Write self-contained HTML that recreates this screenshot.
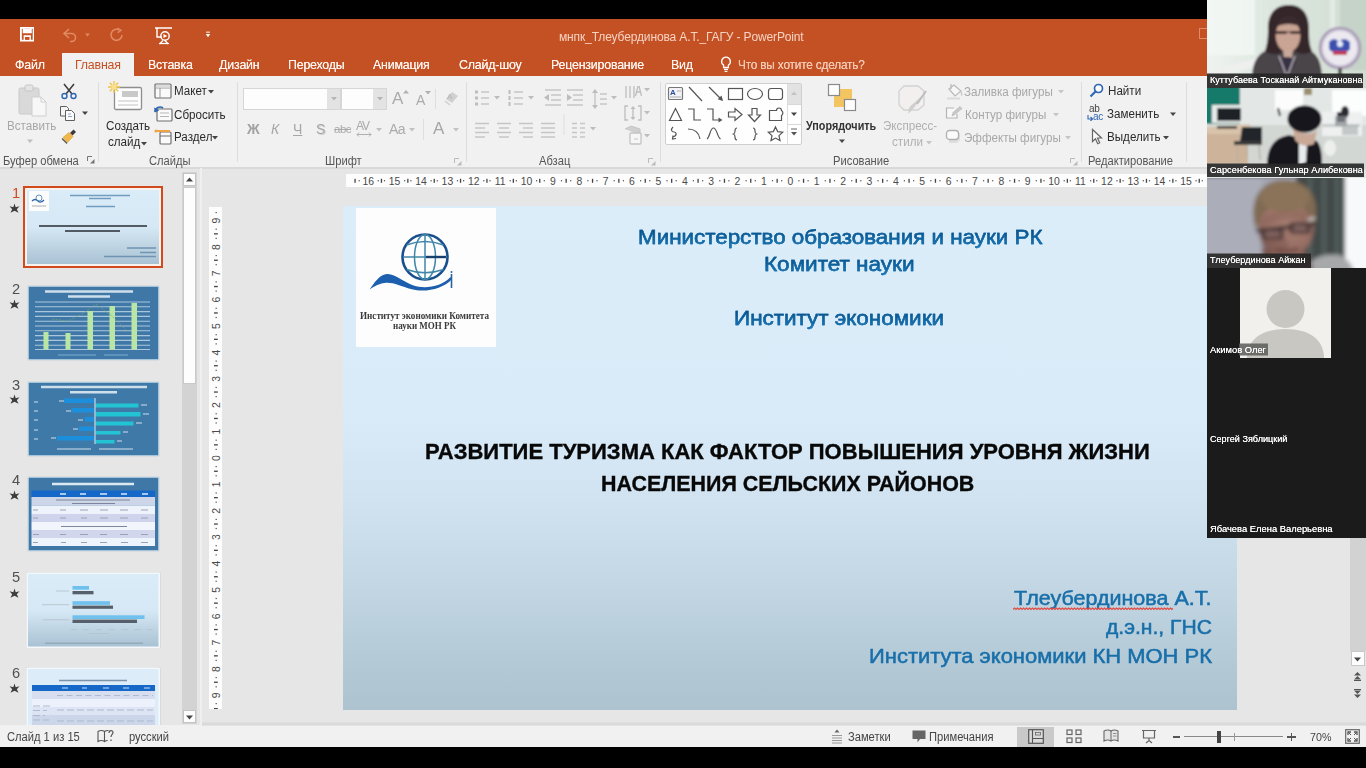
<!DOCTYPE html>
<html lang="ru">
<head>
<meta charset="utf-8">
<title>PowerPoint</title>
<style>
*{margin:0;padding:0;box-sizing:border-box}
html,body{width:1366px;height:768px;overflow:hidden;background:#000}
body{font-family:"Liberation Sans",sans-serif;position:relative;color:#333}
.abs{position:absolute}
.t{position:absolute;white-space:nowrap;line-height:1}
.blur{filter:blur(.45px)}
#titlebar{left:0;top:19px;width:1207px;height:57px;background:#c45124}
#ribbon{left:0;top:76px;width:1207px;height:91px;background:#f1f1f1}
#work{left:0;top:167px;width:1366px;height:558px;background:#e6e6e6}
#status{left:0;top:725px;width:1366px;height:22px;background:#f1f1f1}
#hometab{left:62px;top:53px;width:72px;height:24px;background:#f1f1f1}
.tab{top:59.400px;font-size:12.4px;color:#fdf3ee;letter-spacing:-.2px;text-shadow:0 0 .5px #fdf3ee}
.rl{font-size:12.5px;color:#2b2b2b;transform:scaleX(.93);transform-origin:0 50%}
.rl.dis{color:#a6a6a6}
.grp{font-size:12px;color:#555;top:155px;transform:scaleX(.93);transform-origin:0 50%}
.sep{position:absolute;top:82px;width:1px;height:80px;background:#dcdcdc}
#slide{left:343px;top:206px;width:894px;height:504px;background:linear-gradient(180deg,#dcedfa 0%,#d9ebf8 42%,#d0e2ef 60%,#c0d4e1 78%,#b2c8d5 92%,#adc3d0 100%)}
.sh{font-size:21px;color:#0b6aa8;text-align:center}
.st1{font-size:20.800px;color:#0f6aa6;transform-origin:0 0;background:linear-gradient(180deg,#07528c 22%,#1a7dbd 80%);-webkit-background-clip:text;background-clip:text;-webkit-text-fill-color:transparent;padding:2px 0 5px;-webkit-text-stroke:.45px #0d5f9b}
.st2{font-size:21.400px;font-weight:bold;color:#080808;transform-origin:0 0;padding:2px 0 5px;-webkit-text-stroke:.35px #080808}
.st3{font-size:19.300px;color:#186fa9;transform-origin:0 0;padding:2px 0 5px;-webkit-text-stroke:.5px #186fa9}
.sb{font-size:12px;color:#444;transform:scaleX(.93);transform-origin:0 50%}
.num{font-size:14.600px;color:#555}
.star{font-size:11px;color:#444}
.thumb{position:absolute;box-shadow:0 0 1px #9ab}
#video{left:1207px;top:0;width:159px;height:538px;background:#1b1b1b;overflow:hidden}
.vn{position:absolute;font-size:9px;color:#fff;white-space:nowrap;line-height:1;transform-origin:0 50%;text-shadow:0 0 .5px #fff}
</style>
</head>
<body>
<!-- base frames -->
<div class="abs" id="titlebar"></div>
<div class="abs" id="ribbon"></div>
<div class="abs" id="work"></div>
<div class="abs" id="status"></div>
<div class="abs" id="hometab"></div>
<div class="abs" style="left:0;top:167px;width:1207px;height:1.500px;background:#d9d9d9"></div>

<!--TITLE-->
<div class="blur">
<!-- save icon -->
<svg class="abs" style="left:19.500px;top:27px" width="14.500" height="14.500" viewBox="0 0 16 16"><path d="M1 1h14v14H1z M4 1v5h8V1 M5 15v-5h6v5" fill="none" stroke="#fff" stroke-width="2"/><rect x="4" y="2" width="8" height="3.5" fill="#fff"/><rect x="5.5" y="11" width="5" height="3" fill="#c45124"/></svg>
<!-- undo -->
<svg class="abs" style="left:62px;top:27px" width="30" height="16" viewBox="0 0 30 16"><path d="M7 2L2 6.5 7 11M2.5 6.5h7a4 4 0 0 1 0 8H8" fill="none" stroke="#e08a63" stroke-width="1.6"/><path d="M23 6.5l2.5 3 2.5-3z" fill="#e08a63"/></svg>
<!-- redo -->
<svg class="abs" style="left:109px;top:27px" width="16" height="16" viewBox="0 0 16 16"><path d="M10.5 3.2A5.5 5.5 0 1 0 13 8" fill="none" stroke="#e08a63" stroke-width="1.6"/><path d="M8.5 1l3.5 2.2-3.2 2.5" fill="none" stroke="#e08a63" stroke-width="1.4"/></svg>
<!-- slideshow from start -->
<svg class="abs" style="left:154px;top:26px" width="20" height="20" viewBox="0 0 20 20"><path d="M1 2h17M3 2v9h5M9 14.5l-3.5 3.5M11 14.5l3 3.5" fill="none" stroke="#fff" stroke-width="1.4"/><circle cx="11" cy="10" r="4.2" fill="none" stroke="#fff" stroke-width="1.4"/><path d="M9.5 8.5l3 1.5-3 1.5" fill="#fff" stroke="#fff" stroke-width=".8"/><path d="M5 17.5h10" stroke="#fff" stroke-width="1.2"/></svg>
<!-- qat customise -->
<svg class="abs" style="left:205px;top:31px" width="6" height="8" viewBox="0 0 8 10"><path d="M1.5 1.2h5" stroke="#fff" stroke-width="1.3"/><path d="M1 3.5h6L4 8z" fill="#fff"/></svg>
<div class="t" style="left:559px;top:30.800px;font-size:12.300px;color:#f6d3c3;letter-spacing:-.15px;transform:scaleX(.978);transform-origin:0 50%">мнпк_Тлеубердинова А.Т._ГАГУ - PowerPoint</div>
</div>
<!-- window-control hint at right edge of title bar -->
<div class="abs" style="left:1199px;top:28px;width:8px;height:11px;border:1.5px solid #e6a58a;border-right:none;opacity:.7"></div>
<!--TABS-->
<div class="blur">
<div class="t tab" style="left:15px">Файл</div>
<div class="t tab" style="left:75px;color:#c45124">Главная</div>
<div class="t tab" style="left:148px">Вставка</div>
<div class="t tab" style="left:219px">Дизайн</div>
<div class="t tab" style="left:288px">Переходы</div>
<div class="t tab" style="left:373px">Анимация</div>
<div class="t tab" style="left:459px">Слайд-шоу</div>
<div class="t tab" style="left:551px">Рецензирование</div>
<div class="t tab" style="left:671px">Вид</div>
<svg class="abs" style="left:720px;top:56px" width="12" height="17" viewBox="0 0 12 17"><path d="M6 1.2a4.3 4.3 0 0 0-2.4 7.9V11.5h4.8V9.1A4.3 4.3 0 0 0 6 1.2z" fill="none" stroke="#fff" stroke-width="1.3"/><path d="M4 13.3h4M4.6 15.3h2.8" stroke="#fff" stroke-width="1.2"/></svg>
<div class="t tab" style="left:738px;color:#f3c9b5;text-shadow:0 0 .4px #f3c9b5;transform:scaleX(.955);transform-origin:0 50%">Что вы хотите сделать?</div>
</div>
<!--RIBBON-->
<div class="blur" id="rb">
<!-- separators -->
<div class="sep" style="left:98px"></div><div class="sep" style="left:237px"></div><div class="sep" style="left:466px"></div><div class="sep" style="left:660px"></div><div class="sep" style="left:1081px"></div><div class="sep" style="left:1186px"></div>
<!-- ===== Clipboard ===== -->
<svg class="abs" style="left:17px;top:83px" width="34" height="36" viewBox="0 0 34 36"><rect x="2" y="5" width="20" height="26" rx="1.5" fill="#d9d9d9" stroke="#c9c9c9"/><rect x="8" y="2" width="8" height="6" rx="1.5" fill="#e4e4e4" stroke="#c4c4c4"/><path d="M15 14h9l5 5v14H15z" fill="#f7f7f7" stroke="#cfcfcf"/><path d="M24 14v5h5" fill="none" stroke="#cfcfcf"/></svg>
<div class="t rl dis" style="left:7px;top:120px">Вставить</div>
<svg class="abs" style="left:27px;top:139px" width="7" height="5"><path d="M0 .5h6L3 4z" fill="#bdbdbd"/></svg>
<!-- scissors -->
<svg class="abs" style="left:60px;top:83px" width="18" height="17" viewBox="0 0 18 17"><path d="M4 1l8 10M14 1L6 11" stroke="#3b3b3b" stroke-width="1.5" fill="none"/><circle cx="4.5" cy="13" r="2.5" fill="none" stroke="#2f66b3" stroke-width="1.4"/><circle cx="13.5" cy="13" r="2.5" fill="none" stroke="#2f66b3" stroke-width="1.4"/></svg>
<!-- copy -->
<svg class="abs" style="left:59px;top:105px" width="18" height="17" viewBox="0 0 18 17"><path d="M1.5 1.5h6l2 2V11h-8z" fill="#f4f4f4" stroke="#5f5f5f"/><path d="M6.500 5.500h6l3 3V15.500h-9z" fill="#fbfbfb" stroke="#5f5f5f"/><path d="M9 9h3M9 11.500h4" stroke="#8ea5c8"/></svg>
<svg class="abs" style="left:82px;top:111px" width="7" height="5"><path d="M0 .5h6L3 4z" fill="#444"/></svg>
<!-- format painter -->
<svg class="abs" style="left:60px;top:128px" width="18" height="17" viewBox="0 0 18 17"><path d="M10 5l3.500-3.500 2.500 2.500L12.500 7.500z" fill="#3b3b3b"/><path d="M3 9.500L9 4.500l4 4L7.500 14.500z" fill="#f0b84a" stroke="#d79b2c" stroke-width=".6"/><path d="M2 10.500l5 5" stroke="#555" stroke-width="1.2"/></svg>
<div class="t grp" style="left:3px">Буфер обмена</div>
<svg class="abs lau" style="left:87px;top:156px" width="8" height="8" viewBox="0 0 8 8"><path d="M.5 5V.5H5" fill="none" stroke="#777"/><path d="M3 7.500h4.500V3z" fill="#777"/></svg>
<!-- ===== Slides ===== -->
<svg class="abs" style="left:108px;top:81px" width="36" height="32" viewBox="0 0 36 32"><rect x="6.500" y="6.500" width="27" height="22" rx="1.500" fill="#fdfdfd" stroke="#8e8e8e" stroke-width="1.3"/><rect x="14" y="10" width="16" height="6" fill="#c9c9c9"/><path d="M10 20h20M10 24h20" stroke="#c3c3c3" stroke-width="1.2"/><path d="M6 0v12M0 6h12M1.800 1.800l8.400 8.400M10.200 1.800L1.800 10.200" stroke="#efc23e" stroke-width="1.3"/><circle cx="6" cy="6" r="2.600" fill="#fbe08a"/></svg>
<div class="t rl" style="left:106px;top:120px">Создать</div>
<div class="t rl" style="left:108px;top:136px">слайд</div>
<svg class="abs" style="left:141px;top:142px" width="6" height="4"><path d="M0 0h6L3 3.500z" fill="#444"/></svg>
<!-- layout -->
<svg class="abs" style="left:154px;top:83px" width="18" height="16" viewBox="0 0 18 16"><rect x="1" y="1" width="16" height="14" rx="1" fill="#fafafa" stroke="#6f6f6f" stroke-width="1.2"/><path d="M1 5h16M6 5v10" stroke="#9a9a9a"/><rect x="2" y="2" width="14" height="2.500" fill="#dcdcdc"/></svg>
<div class="t rl" style="left:174px;top:85px">Макет</div>
<svg class="abs" style="left:208px;top:90px" width="6" height="4"><path d="M0 0h6L3 3.500z" fill="#444"/></svg>
<!-- reset -->
<svg class="abs" style="left:154px;top:105px" width="19" height="17" viewBox="0 0 19 17"><rect x="3" y="4" width="15" height="12" rx="1" fill="#fafafa" stroke="#6f6f6f" stroke-width="1.2"/><path d="M6 8h9M6 11.500h9" stroke="#b5b5b5"/><path d="M1 7a5 5 0 0 1 8-4" fill="none" stroke="#2f66b3" stroke-width="1.6"/><path d="M0 2.500l1 5 4.200-2z" fill="#2f66b3"/></svg>
<div class="t rl" style="left:174px;top:109px">Сбросить</div>
<!-- section -->
<svg class="abs" style="left:154px;top:128px" width="19" height="17" viewBox="0 0 19 17"><rect x="6" y="4" width="11" height="12" rx="1" fill="#fafafa" stroke="#6f6f6f" stroke-width="1.2"/><path d="M6 8h11" stroke="#6f6f6f"/><path d="M1 3h15" stroke="#f0a445" stroke-width="2"/><circle cx="2" cy="3" r="1.600" fill="#f0a445"/></svg>
<div class="t rl" style="left:174px;top:131px">Раздел</div>
<svg class="abs" style="left:212px;top:136px" width="6" height="4"><path d="M0 0h6L3 3.500z" fill="#444"/></svg>
<div class="t grp" style="left:149px">Слайды</div>
<!-- ===== Font ===== -->
<div class="abs" style="left:243px;top:88px;width:98px;height:22px;background:#fdfdfd;border:1px solid #d6d6d6"></div>
<div class="abs" style="left:327px;top:89px;width:13px;height:20px;background:#e3e3e3"></div>
<svg class="abs" style="left:331px;top:97px" width="6" height="4"><path d="M0 0h6L3 3.500z" fill="#b5b5b5"/></svg>
<div class="abs" style="left:341px;top:88px;width:46px;height:22px;background:#fdfdfd;border:1px solid #d6d6d6"></div>
<div class="abs" style="left:373px;top:89px;width:13px;height:20px;background:#e3e3e3"></div>
<svg class="abs" style="left:377px;top:97px" width="6" height="4"><path d="M0 0h6L3 3.500z" fill="#b5b5b5"/></svg>
<div class="t" style="left:392px;top:90px;font-size:17px;color:#ababab">A</div>
<svg class="abs" style="left:403px;top:90px" width="6" height="4"><path d="M0 3.500h6L3 0z" fill="#b0b0b0"/></svg>
<div class="t" style="left:416px;top:93px;font-size:14px;color:#ababab">A</div>
<svg class="abs" style="left:425px;top:91px" width="6" height="4"><path d="M0 0h6L3 3.500z" fill="#b0b0b0"/></svg>
<div class="abs" style="left:435px;top:89px;width:1px;height:20px;background:#dedede"></div>
<svg class="abs" style="left:443px;top:90px" width="18" height="18" viewBox="0 0 18 18"><path d="M3 9l6-7 6 4-6 7z" fill="#d0d0d0"/><path d="M2 11l5 4" stroke="#cfcfcf" stroke-width="1.500"/><text x="4" y="9" font-size="8" fill="#b5b5b5" font-family="Liberation Sans">A</text></svg>
<div class="t" style="left:247px;top:122px;font-size:14px;color:#a2a2a2;font-weight:bold">Ж</div>
<div class="t" style="left:271px;top:122px;font-size:14px;color:#a6a6a6;font-style:italic">К</div>
<div class="t" style="left:293px;top:122px;font-size:14px;color:#a6a6a6;text-decoration:underline">Ч</div>
<div class="t" style="left:316px;top:122px;font-size:14px;color:#a6a6a6;text-shadow:1px 1px 0 #d0d0d0">S</div>
<div class="t" style="left:334px;top:124px;font-size:11.500px;color:#ababab;text-decoration:line-through;letter-spacing:-.5px">abc</div>
<div class="t" style="left:356px;top:120px;font-size:12px;color:#a9a9a9;letter-spacing:-1px">AV</div>
<svg class="abs" style="left:356px;top:132px" width="16" height="5" viewBox="0 0 16 5"><path d="M1 2.500h14M3 .5l-2 2 2 2M13 .5l2 2-2 2" fill="none" stroke="#b0b0b0"/></svg>
<svg class="abs" style="left:376px;top:128px" width="6" height="4"><path d="M0 0h6L3 3.500z" fill="#c2c2c2"/></svg>
<div class="t" style="left:389px;top:122px;font-size:14px;color:#ababab;letter-spacing:-.5px">Aa</div>
<svg class="abs" style="left:409px;top:128px" width="6" height="4"><path d="M0 0h6L3 3.500z" fill="#c2c2c2"/></svg>
<div class="abs" style="left:423px;top:119px;width:1px;height:21px;background:#dedede"></div>
<div class="t" style="left:433px;top:120px;font-size:17px;color:#a6a6a6">A</div>
<svg class="abs" style="left:453px;top:128px" width="6" height="4"><path d="M0 0h6L3 3.500z" fill="#c2c2c2"/></svg>
<div class="t grp" style="left:325px">Шрифт</div>
<svg class="abs lau" style="left:454px;top:158px" width="8" height="8" viewBox="0 0 8 8"><path d="M.5 5V.5H5" fill="none" stroke="#bbb"/><path d="M3 7.500h4.500V3z" fill="#bbb"/></svg>
<!-- ===== Paragraph ===== -->
<g>
<svg class="abs" style="left:472px;top:86px" width="190" height="62" viewBox="0 0 190 62">
<g stroke="#c6c6c6" stroke-width="1.300" fill="none">
<path d="M9 6h8M9 12h8M9 18h8"/><path d="M42 6h9M42 12h9M42 18h9"/>
<path d="M73 4h16M79 9h10M79 14h10M73 19h16"/><path d="M95 4h16M101 9h10M101 14h10M95 19h16"/>
<path d="M128 8h7M128 13h7M128 18h7"/>
<path d="M3 37.500h14M3 42h10M3 46.500h14M3 51h10"/>
<path d="M25 37.500h14M27 42h10M25 46.500h14M27 51h10"/>
<path d="M47 37.500h14M51 42h10M47 46.500h14M51 51h10"/>
<path d="M69 37.500h14M69 42h14M69 46.500h14M69 51h14"/>
<path d="M100 37.500h5M108 37.500h5M100 42h5M108 42h5M100 46.500h5M108 46.500h5M100 51h5M108 51h5"/>
</g>
<g fill="#bdbdbd">
<rect x="3" y="4.500" width="3" height="3"/><rect x="3" y="10.500" width="3" height="3"/><rect x="3" y="16.500" width="3" height="3"/>
<rect x="36.500" y="4" width="2" height="4"/><rect x="36.500" y="10" width="2" height="4"/><rect x="36.500" y="16" width="2" height="4"/>
<path d="M72 11.500l5-3.500v7z"/><path d="M100 11.500l-5-3.500v7z"/>
<path d="M123 3l-3 4h6zM123 23l-3-4h6z"/><rect x="122.400" y="6" width="1.200" height="14"/>
<path d="M22 10h6l-3 3.500zM56 10h6l-3 3.500zM139 10h6l-3 3.500zM118 41h6l-3 3.500z"/>
<path d="M172 2h6l-3 3.500zM172 25h6l-3 3.500zM172 48h6l-3 3.500z" />
</g>
<path d="M92 28v21" stroke="#dedede"/>
<g stroke="#bdbdbd" stroke-width="1.300" fill="none"><path d="M154 -3v15M158 -3v15M162 -3v15"/><path d="M163.500 10l3-12 3 12M164.800 6h3.400"/></g>
<g stroke="#bdbdbd" stroke-width="1.300" fill="none"><path d="M156 20h-3v14h3M166 20h3v14h-3"/><path d="M161 22v10"/></g><path d="M161 20l-2.500 3h5zM161 34l-2.500-3h5z" fill="#bdbdbd"/>
<path d="M153 43l6-3 9 3v6" fill="#cfcfcf" stroke="#c4c4c4"/><rect x="158" y="47" width="11" height="11" rx="1" fill="#f6f6f6" stroke="#c4c4c4" stroke-width="1.300"/><path d="M162 53h4" stroke="#c4c4c4"/>
</svg>
</g>
<div class="t grp" style="left:539px">Абзац</div>
<svg class="abs lau" style="left:648px;top:158px" width="8" height="8" viewBox="0 0 8 8"><path d="M.5 5V.5H5" fill="none" stroke="#bbb"/><path d="M3 7.500h4.500V3z" fill="#bbb"/></svg>
<!-- ===== Drawing ===== -->
<div class="abs" style="left:665px;top:83px;width:137px;height:62px;background:#fefefe;border:1px solid #cfcfcf;border-radius:2px"></div>
<div class="abs" style="left:788px;top:84px;width:13px;height:20px;background:#e2e2e2"></div>
<div class="abs" style="left:788px;top:104px;width:13px;height:1px;background:#d8d8d8"></div>
<div class="abs" style="left:788px;top:124px;width:13px;height:1px;background:#d8d8d8"></div>
<div class="abs" style="left:787px;top:84px;width:1px;height:60px;background:#dcdcdc"></div>
<svg class="abs" style="left:791px;top:91px" width="7" height="5"><path d="M0 4h6L3 .5z" fill="#c4c4c4"/></svg>
<svg class="abs" style="left:791px;top:112px" width="7" height="5"><path d="M0 .5h6L3 4z" fill="#444"/></svg>
<svg class="abs" style="left:791px;top:128px" width="7" height="9"><path d="M0 1h6" stroke="#666"/><path d="M0 4h6L3 7.500z" fill="#555"/></svg>
<svg class="abs" style="left:666px;top:84px" width="122" height="60" viewBox="0 0 122 60">
<g fill="none" stroke="#555" stroke-width="1.200">
<rect x="2.500" y="3.500" width="14" height="12" rx="1" stroke="#777" fill="#f4f4f8"/>
<path d="M23 3l13 14"/><path d="M43 3l13 13"/><path d="M57 17l-1.500-5.500-3.800 3.800z" fill="#555" stroke="none"/>
<rect x="62.500" y="4.500" width="14" height="11"/>
<ellipse cx="89" cy="10" rx="7.500" ry="5.500"/>
<rect x="102.500" y="4.500" width="14" height="11" rx="2.500"/>
<path d="M9.500 24.500L3.500 36.500h12z"/>
<path d="M22 25h6v11h7"/>
<path d="M41 25h6v11h6"/><path d="M56.500 36l-4-2.500v5z" fill="#555" stroke="none"/>
<path d="M62.500 28h6.500v-3.500l7 6-7 6V33h-6.500z"/>
<path d="M86 24.500h5v6.500h3.500l-6 6.500-6-6.500H86z"/>
<path d="M103.500 36.500v-10h7a2.500 2.500 0 0 1 5 0 3 3 0 0 1 0 5v5z"/>
<path d="M7 43c-3 3-1 5 1 5s4 3-1 5m3 1.500l-3.500.5.500-3.500"/>
<path d="M22 45c7 0 11 4 12 10"/>
<path d="M41 55c3-2 3-11 6.500-11s3.500 9 7 11"/>
<path d="M71 44c-2 0-2 1.500-2 3s0 2.500-1.500 3c1.500.500 1.500 1.500 1.500 3s0 3 2 3"/>
<path d="M87 44c2 0 2 1.500 2 3s0 2.500 1.500 3c-1.500.500-1.500 1.500-1.500 3s0 3-2 3"/>
<path d="M109.500 43l2.200 4.600 5 .6-3.700 3.400 1 5-4.500-2.500-4.500 2.500 1-5-3.700-3.400 5-.6z"/>
</g>
<text x="4" y="11" font-size="8" font-weight="bold" fill="#2b4d9b" font-family="Liberation Sans">A</text><path d="M11 7h4M4 13h11" stroke="#999" stroke-width=".8"/>
</svg>
<!-- arrange -->
<svg class="abs" style="left:826px;top:82px" width="34" height="32" viewBox="0 0 34 32"><rect x="8" y="7" width="18" height="18" fill="#f2c561"/><rect x="2.500" y="2.500" width="11" height="11" fill="#fdfdfd" stroke="#8a8a8a" stroke-width="1.200"/><rect x="18.500" y="17.500" width="11" height="11" fill="#fdfdfd" stroke="#8a8a8a" stroke-width="1.200"/></svg>
<div class="t rl" style="left:806px;top:120px;font-weight:bold;color:#333;font-size:12px;transform:scaleX(.9)">Упорядочить</div>
<svg class="abs" style="left:839px;top:139px" width="7" height="5"><path d="M0 .5h6L3 4z" fill="#444"/></svg>
<!-- quick styles -->
<svg class="abs" style="left:895px;top:83px" width="36" height="34" viewBox="0 0 36 34"><path d="M9 3h14l6 5v14l-6 5H9l-5-5V8z" fill="#f4efef" stroke="#d2d2d2" stroke-width="1.300"/><path d="M30 10L18 26l-5 5 1.500-7z" fill="#cfcfcf"/><path d="M31 8l-9 13" stroke="#bdbdbd" stroke-width="2"/></svg>
<div class="t rl dis" style="left:883px;top:120px;color:#b0b0b0">Экспресс-</div>
<div class="t rl dis" style="left:892px;top:136px;color:#b0b0b0">стили</div>
<svg class="abs" style="left:926px;top:141px" width="6" height="4"><path d="M0 0h6L3 3.500z" fill="#c6c6c6"/></svg>
<!-- fill / outline / effects -->
<svg class="abs" style="left:946px;top:82px" width="18" height="18" viewBox="0 0 18 18"><path d="M5 2v5M3 7l5-4 7 6-6 5z" fill="#f6f6f6" stroke="#b9b9b9" stroke-width="1.200"/><path d="M15 10c1 2 1.500 3 0 3.500" stroke="#b9b9b9" fill="none"/><path d="M1 16.500h13" stroke="#dadada" stroke-width="2"/></svg>
<div class="t rl dis" style="left:964px;top:86px;color:#a8a8a8">Заливка фигуры</div>
<svg class="abs" style="left:1058px;top:90px" width="6" height="4"><path d="M0 0h6L3 3.500z" fill="#c6c6c6"/></svg>
<svg class="abs" style="left:945px;top:105px" width="18" height="17" viewBox="0 0 18 17"><path d="M9 3H1.500v10H12V9" fill="#f8f8f8" stroke="#b5b5b5" stroke-width="1.200"/><path d="M7 11l1-3.500 7-6 2 2-7 6z" fill="#c9c9c9" stroke="#b0b0b0" stroke-width=".6"/></svg>
<div class="t rl dis" style="left:965px;top:109px;color:#a8a8a8">Контур фигуры</div>
<svg class="abs" style="left:1053px;top:113px" width="6" height="4"><path d="M0 0h6L3 3.500z" fill="#c6c6c6"/></svg>
<svg class="abs" style="left:945px;top:128px" width="18" height="17" viewBox="0 0 18 17"><path d="M4 5h11v7l-3 3H4z" fill="#dedede"/><rect x="1.500" y="2.500" width="12" height="9" rx="3" fill="#fbfbfb" stroke="#b0b0b0" stroke-width="1.300"/></svg>
<div class="t rl dis" style="left:964px;top:132px;color:#a8a8a8">Эффекты фигуры</div>
<svg class="abs" style="left:1065px;top:136px" width="6" height="4"><path d="M0 0h6L3 3.500z" fill="#c6c6c6"/></svg>
<div class="t grp" style="left:833px">Рисование</div>
<svg class="abs lau" style="left:1070px;top:158px" width="8" height="8" viewBox="0 0 8 8"><path d="M.5 5V.5H5" fill="none" stroke="#bbb"/><path d="M3 7.500h4.500V3z" fill="#bbb"/></svg>
<!-- ===== Editing ===== -->
<svg class="abs" style="left:1089px;top:83px" width="16" height="15" viewBox="0 0 16 15"><circle cx="9.500" cy="5.500" r="4" fill="#fbfbfb" stroke="#2f66b3" stroke-width="1.700"/><path d="M6.500 8.500L1.500 13.500" stroke="#2f66b3" stroke-width="2.200"/></svg>
<div class="t rl" style="left:1108px;top:85px">Найти</div>
<div class="t" style="left:1089px;top:104px;font-size:10px;color:#444;letter-spacing:-.4px">ab</div>
<div class="t" style="left:1093px;top:112px;font-size:10px;color:#2f66b3;letter-spacing:-.4px">ac</div>
<svg class="abs" style="left:1087px;top:114px" width="7" height="7" viewBox="0 0 7 7"><path d="M1 1v4h4M3.500 3l2 2-2 2" fill="none" stroke="#2f66b3" stroke-width="1.100"/></svg>
<div class="t rl" style="left:1107px;top:108px">Заменить</div>
<svg class="abs" style="left:1170px;top:112px" width="7" height="5"><path d="M0 .5h6L3 4z" fill="#444"/></svg>
<svg class="abs" style="left:1091px;top:128px" width="12" height="17" viewBox="0 0 12 17"><path d="M1.500 1.500v12l3-2.800 2.200 5 2-1-2.200-4.700h4z" fill="#fbfbfb" stroke="#666" stroke-width="1.200"/></svg>
<div class="t rl" style="left:1107px;top:131px">Выделить</div>
<svg class="abs" style="left:1163px;top:136px" width="6" height="4"><path d="M0 0h6L3 3.500z" fill="#444"/></svg>
<div class="t grp" style="left:1088px">Редактирование</div>
</div>
<!--LEFTPANEL-->
<div class="blur">
<div class="abs" style="left:182px;top:172px;width:15px;height:552px;background:#d3d3d3"></div>
<div class="abs" style="left:183px;top:173px;width:13px;height:13px;background:#fdfdfd;border:1px solid #c4c4c4"></div>
<svg class="abs" style="left:186px;top:177px" width="7" height="5"><path d="M0 4.500h7L3.500 .5z" fill="#444"/></svg>
<div class="abs" style="left:183px;top:187px;width:13px;height:197px;background:#fdfdfd;border:1px solid #c9c9c9"></div>
<div class="abs" style="left:183px;top:710px;width:13px;height:13px;background:#fdfdfd;border:1px solid #c4c4c4"></div>
<svg class="abs" style="left:186px;top:715px" width="7" height="5"><path d="M0 .5h7L3.500 4.500z" fill="#444"/></svg>
<div class="abs" style="left:200px;top:168px;width:2px;height:557px;background:#efefef"></div>
<div class="t num" style="left:12px;top:185.8px;color:#d2491b">1</div>
<svg class="abs" style="left:9px;top:202.5px" width="11" height="11" viewBox="0 0 11 11"><path d="M5.500 .5l1.200 3.700 3.800-.9-2.700 2.900 1.700 3.500-4-1.900-4 1.900 1.700-3.500L.5 3.300l3.800.9z" fill="#3c3c3c"/></svg>
<div class="t num" style="left:12px;top:281.9px;color:#505050">2</div>
<svg class="abs" style="left:9px;top:298.6px" width="11" height="11" viewBox="0 0 11 11"><path d="M5.500 .5l1.200 3.700 3.800-.9-2.700 2.900 1.700 3.500-4-1.900-4 1.900 1.700-3.500L.5 3.300l3.800.9z" fill="#3c3c3c"/></svg>
<div class="t num" style="left:12px;top:377.7px;color:#505050">3</div>
<svg class="abs" style="left:9px;top:394.4px" width="11" height="11" viewBox="0 0 11 11"><path d="M5.500 .5l1.200 3.700 3.800-.9-2.700 2.900 1.700 3.500-4-1.900-4 1.900 1.700-3.500L.5 3.300l3.800.9z" fill="#3c3c3c"/></svg>
<div class="t num" style="left:12px;top:473.3px;color:#505050">4</div>
<svg class="abs" style="left:9px;top:490.0px" width="11" height="11" viewBox="0 0 11 11"><path d="M5.500 .5l1.200 3.700 3.800-.9-2.700 2.900 1.700 3.500-4-1.900-4 1.900 1.700-3.500L.5 3.300l3.800.9z" fill="#3c3c3c"/></svg>
<div class="t num" style="left:12px;top:570.1px;color:#505050">5</div>
<svg class="abs" style="left:9px;top:587.6px" width="11" height="11" viewBox="0 0 11 11"><path d="M5.500 .5l1.200 3.700 3.800-.9-2.700 2.900 1.700 3.500-4-1.900-4 1.900 1.700-3.500L.5 3.300l3.800.9z" fill="#3c3c3c"/></svg>
<div class="t num" style="left:12px;top:665.7px;color:#505050">6</div>
<svg class="abs" style="left:9px;top:683.2px" width="11" height="11" viewBox="0 0 11 11"><path d="M5.500 .5l1.200 3.700 3.800-.9-2.700 2.900 1.700 3.500-4-1.900-4 1.900 1.700-3.500L.5 3.300l3.800.9z" fill="#3c3c3c"/></svg>
<div class="abs" style="left:23px;top:185.500px;width:140px;height:82px;border:2.500px solid #d2491b;background:#f7f2ee"></div>
<svg class="abs" style="left:27px;top:189.500px" width="132" height="74" viewBox="0 0 132 74"><defs><linearGradient id="tg1" x1="0" y1="0" x2="0" y2="1"><stop offset="0" stop-color="#dbecf9"/><stop offset=".5" stop-color="#d6e8f5"/><stop offset="1" stop-color="#a9c2d3"/></linearGradient><filter id="tb"><feGaussianBlur stdDeviation=".75"/></filter></defs><rect width="132" height="74" fill="url(#tg1)"/><rect x="2" y="1" width="20" height="20" fill="#fcfcfc"/><g filter="url(#tb)"><path d="M5 11c2-2 4-2 6 0s4 1 6-1" stroke="#2b62a8" fill="none" stroke-width="1.200"/><circle cx="12" cy="8" r="3" fill="none" stroke="#3c78b0" stroke-width=".8"/><path d="M5 16h14" stroke="#999" stroke-width=".8"/><path d="M43 5.500h60M62 8.500h22M59 16.500h29" stroke="#6f9cc0" stroke-width="1.400"/><path d="M12 36h108M38 41h55" stroke="#2a2f36" stroke-width="1.700"/><path d="M100 58h29M113 62.500h16M77 66.500h52" stroke="#6f93b2" stroke-width="1.300"/></g></svg>
<svg class="abs thumb" style="left:27.500px;top:285.500px" width="131" height="74" viewBox="0 0 131 74"><rect width="131" height="74" fill="#bfd7ea"/><rect x=".8" y=".8" width="129.400" height="72.400" fill="#3f78a6"/><g filter="url(#tb)"><path d="M17 5.500h88M40 10.500h42" stroke="#e8f1f8" stroke-width="2.600" opacity=".85"/><g stroke="#a9c6dd" stroke-width="1.100"><path d="M7 16h115M7 20.800h115M7 25.600h115M7 30.400h115M7 35.200h115M7 40h115M7 44.800h115M7 49.600h115M7 54.400h115M7 59.200h115M7 63.500h115"/></g><g fill="#b9e6a4"><rect x="15.500" y="46" width="5" height="17.500"/><rect x="37.500" y="47" width="5" height="16.500"/><rect x="59.500" y="25" width="5.500" height="38.500"/><rect x="81.500" y="20" width="5.500" height="43.500"/><rect x="103.500" y="17" width="5.500" height="46.500"/></g><path d="M24 33l16 2 14-7 14-10 16 12 16 16" stroke="#7aa36a" stroke-width=".7" fill="none" stroke-dasharray="2 1.500"/><path d="M30 69h38M76 69h24" stroke="#7fb0cf" stroke-width="1.200"/></g></svg>
<svg class="abs thumb" style="left:27.500px;top:381.500px" width="131" height="74" viewBox="0 0 131 74"><rect width="131" height="74" fill="#bfd7ea"/><rect x=".8" y=".8" width="129.400" height="72.400" fill="#3f79a7"/><g filter="url(#tb)"><path d="M13 5h106M42 10.200h47" stroke="#e8f1f8" stroke-width="2.600" opacity=".85"/><g fill="#1f8fdc"><rect x="36" y="16.500" width="30.500" height="4.500"/><rect x="43.500" y="26" width="23" height="4.500"/><rect x="57" y="35" width="9.500" height="4.500"/><rect x="51" y="44.500" width="15.500" height="4.500"/><rect x="29" y="54" width="37.500" height="4.500"/></g><g fill="#21c3d3"><rect x="67.500" y="21.500" width="43" height="4"/><rect x="67.500" y="30" width="45" height="4.500"/><rect x="67.500" y="39.500" width="38" height="4"/><rect x="67.500" y="49" width="25" height="3.500"/><rect x="67.500" y="58" width="19" height="3.500"/></g><path d="M67 16v46" stroke="#dfeaf3" stroke-width="1"/><g stroke="#cfe0ee" stroke-width="1.200"><path d="M6 20h4M6 29h4M6 38h4M6 48h4M6 57h4M31 19h5M38 29h5M50 38h5M45 47h5M23 56h5M113 23h6M115 32h6M108 41h6M95 50h5M89 59h5"/><path d="M29 67h34M71 67h34"/></g></g></svg>
<svg class="abs thumb" style="left:27.500px;top:477.200px" width="131" height="74" viewBox="0 0 131 74"><rect width="131" height="74" fill="#bfd7ea"/><rect x=".8" y=".8" width="129.400" height="72.400" fill="#3f78a6"/><g filter="url(#tb)"><path d="M24 7h82" stroke="#eef4f9" stroke-width="2.600" opacity=".9"/><rect x="3.500" y="13.500" width="123.500" height="6.500" fill="#1268c8"/><rect x="3.500" y="20" width="123.500" height="8.500" fill="#cdd6e8"/><rect x="3.500" y="28.500" width="123.500" height="8.500" fill="#eef3fb"/><rect x="3.500" y="37" width="123.500" height="8" fill="#cfd4ec"/><rect x="3.500" y="45" width="123.500" height="8" fill="#f2f6fc"/><rect x="3.500" y="53" width="123.500" height="8" fill="#d2d6ec"/><rect x="3.500" y="61" width="123.500" height="8" fill="#eef4fc"/><g stroke="#dce9f8" stroke-width="1.300"><path d="M32 17h6M52 17h6M72 17h7M93 17h6M114 17h6"/></g><g stroke="#7d8698" stroke-width="1"><path d="M28 23h74M44 26.500h43M33 49.500h66"/><path d="M5 33h5M32 33h6M52 33h8M72 33h8M92 33h8M113 33h7M5 41h5M32 41h6M53 41h6M72 41h8M92 41h8M113 41h7M5 57.500h6M32 57.500h6M52 57.500h8M72 57.500h7M92 57.500h8M113 57.500h7M5 65.500h5M33 65.500h5M53 65.500h6M72 65.500h7M93 65.500h7M113 65.500h7" stroke="#9aa3b5"/></g></g></svg>
<svg class="abs" style="left:26px;top:571.500px" width="134.500" height="76.500" viewBox="0 0 134.500 76.500"><rect width="134.500" height="76.500" rx="1.500" fill="#f4f8fb" stroke="#d0d6da" stroke-width=".8"/><rect x="2" y="2" width="130.500" height="72.500" fill="url(#tg1)"/><g filter="url(#tb)"><g fill="#6fc0ee"><rect x="46.500" y="14" width="16.500" height="3.700"/><rect x="46.500" y="29.200" width="37.500" height="3.700"/><rect x="46.500" y="43.300" width="72" height="3.700"/></g><g fill="#56606a"><rect x="46.500" y="19" width="21" height="3.300"/><rect x="46.500" y="33.600" width="40.500" height="3.200"/><rect x="46.500" y="47.600" width="64.500" height="3.400"/></g><g stroke="#b5c3cd" stroke-width=".9"><path d="M30 19h13M16 32.700h27M17 47.800h26M45 57.700h6M57 57.700h6M70 57.700h6M82 57.700h7M95 57.700h7M108 57.700h7M121 57.700h6M63 61.500h20"/></g><path d="M19 71.200h98" stroke="#93aabb" stroke-width="1.400"/></g></svg>
<svg class="abs" style="left:26px;top:667px" width="134.500" height="58" viewBox="0 0 134.500 58"><rect width="134.500" height="80" rx="1.500" fill="#f4f8fb" stroke="#d0d6da" stroke-width=".8"/><rect x="2" y="2" width="130.500" height="76" fill="#dcecf8"/><g filter="url(#tb)"><path d="M33 13.500h68" stroke="#7b95ab" stroke-width="1.300"/><rect x="6" y="18" width="123" height="6" fill="#1268c8"/><rect x="6" y="24" width="123" height="8" fill="#d6def0"/><rect x="6" y="32" width="123" height="8" fill="#ecf1fb"/><rect x="6" y="40" width="123" height="8" fill="#dde4f3"/><rect x="6" y="48" width="123" height="10" fill="#ccd6ea"/><g stroke="#a9b5c9" stroke-width=".9"><path d="M31 28.500h96" stroke-dasharray="6 3.500"/><path d="M7 39h19M7 43.500h14M31 43h96M7 48.500h12M7 53h16M31 54h96" stroke-dasharray="7 3"/></g><path d="M36 21h6M56 21h5M77 21h6M97 21h6M118 21h6" stroke="#cfe0f6" stroke-width="1.100"/></g></svg>
</div>
<!--RULERS-->
<div class="blur">
<div class="abs" style="left:345.500px;top:174.200px;width:893px;height:13px;background:#fdfdfd"></div>
<svg class="abs" style="left:345px;top:172.600px" width="893" height="15" viewBox="345 0 893 15" font-family="Liberation Sans" font-size="10.400" fill="#4a4a4a" text-anchor="middle"><text x="368.2" y="12">16</text><rect x="380.8" y="5.800" width="1.300" height="4" fill="#444"/><rect x="377.7" y="7" width="1.200" height="1.400" fill="#666"/><rect x="383.9" y="7" width="1.200" height="1.400" fill="#666"/><text x="394.6" y="12">15</text><rect x="407.2" y="5.800" width="1.300" height="4" fill="#444"/><rect x="404.1" y="7" width="1.200" height="1.400" fill="#666"/><rect x="410.3" y="7" width="1.200" height="1.400" fill="#666"/><text x="421.0" y="12">14</text><rect x="433.6" y="5.800" width="1.300" height="4" fill="#444"/><rect x="430.5" y="7" width="1.200" height="1.400" fill="#666"/><rect x="436.7" y="7" width="1.200" height="1.400" fill="#666"/><text x="447.4" y="12">13</text><rect x="459.9" y="5.800" width="1.300" height="4" fill="#444"/><rect x="456.9" y="7" width="1.200" height="1.400" fill="#666"/><rect x="463.0" y="7" width="1.200" height="1.400" fill="#666"/><text x="473.7" y="12">12</text><rect x="486.3" y="5.800" width="1.300" height="4" fill="#444"/><rect x="483.2" y="7" width="1.200" height="1.400" fill="#666"/><rect x="489.4" y="7" width="1.200" height="1.400" fill="#666"/><text x="500.1" y="12">11</text><rect x="512.7" y="5.800" width="1.300" height="4" fill="#444"/><rect x="509.6" y="7" width="1.200" height="1.400" fill="#666"/><rect x="515.8" y="7" width="1.200" height="1.400" fill="#666"/><text x="526.5" y="12">10</text><rect x="539.1" y="5.800" width="1.300" height="4" fill="#444"/><rect x="536.0" y="7" width="1.200" height="1.400" fill="#666"/><rect x="543.7" y="7" width="1.200" height="1.400" fill="#666"/><text x="552.9" y="12">9</text><rect x="565.5" y="5.800" width="1.300" height="4" fill="#444"/><rect x="560.9" y="7" width="1.200" height="1.400" fill="#666"/><rect x="570.1" y="7" width="1.200" height="1.400" fill="#666"/><text x="579.3" y="12">8</text><rect x="591.9" y="5.800" width="1.300" height="4" fill="#444"/><rect x="587.3" y="7" width="1.200" height="1.400" fill="#666"/><rect x="596.4" y="7" width="1.200" height="1.400" fill="#666"/><text x="605.6" y="12">7</text><rect x="618.2" y="5.800" width="1.300" height="4" fill="#444"/><rect x="613.6" y="7" width="1.200" height="1.400" fill="#666"/><rect x="622.8" y="7" width="1.200" height="1.400" fill="#666"/><text x="632.0" y="12">6</text><rect x="644.6" y="5.800" width="1.300" height="4" fill="#444"/><rect x="640.0" y="7" width="1.200" height="1.400" fill="#666"/><rect x="649.2" y="7" width="1.200" height="1.400" fill="#666"/><text x="658.4" y="12">5</text><rect x="671.0" y="5.800" width="1.300" height="4" fill="#444"/><rect x="666.4" y="7" width="1.200" height="1.400" fill="#666"/><rect x="675.6" y="7" width="1.200" height="1.400" fill="#666"/><text x="684.8" y="12">4</text><rect x="697.4" y="5.800" width="1.300" height="4" fill="#444"/><rect x="692.8" y="7" width="1.200" height="1.400" fill="#666"/><rect x="702.0" y="7" width="1.200" height="1.400" fill="#666"/><text x="711.2" y="12">3</text><rect x="723.8" y="5.800" width="1.300" height="4" fill="#444"/><rect x="719.2" y="7" width="1.200" height="1.400" fill="#666"/><rect x="728.3" y="7" width="1.200" height="1.400" fill="#666"/><text x="737.5" y="12">2</text><rect x="750.1" y="5.800" width="1.300" height="4" fill="#444"/><rect x="745.5" y="7" width="1.200" height="1.400" fill="#666"/><rect x="754.7" y="7" width="1.200" height="1.400" fill="#666"/><text x="763.9" y="12">1</text><rect x="776.5" y="5.800" width="1.300" height="4" fill="#444"/><rect x="771.9" y="7" width="1.200" height="1.400" fill="#666"/><rect x="781.1" y="7" width="1.200" height="1.400" fill="#666"/><text x="790.3" y="12">0</text><rect x="802.9" y="5.800" width="1.300" height="4" fill="#444"/><rect x="798.3" y="7" width="1.200" height="1.400" fill="#666"/><rect x="807.5" y="7" width="1.200" height="1.400" fill="#666"/><text x="816.7" y="12">1</text><rect x="829.3" y="5.800" width="1.300" height="4" fill="#444"/><rect x="824.7" y="7" width="1.200" height="1.400" fill="#666"/><rect x="833.9" y="7" width="1.200" height="1.400" fill="#666"/><text x="843.1" y="12">2</text><rect x="855.6" y="5.800" width="1.300" height="4" fill="#444"/><rect x="851.1" y="7" width="1.200" height="1.400" fill="#666"/><rect x="860.2" y="7" width="1.200" height="1.400" fill="#666"/><text x="869.4" y="12">3</text><rect x="882.0" y="5.800" width="1.300" height="4" fill="#444"/><rect x="877.4" y="7" width="1.200" height="1.400" fill="#666"/><rect x="886.6" y="7" width="1.200" height="1.400" fill="#666"/><text x="895.8" y="12">4</text><rect x="908.4" y="5.800" width="1.300" height="4" fill="#444"/><rect x="903.8" y="7" width="1.200" height="1.400" fill="#666"/><rect x="913.0" y="7" width="1.200" height="1.400" fill="#666"/><text x="922.2" y="12">5</text><rect x="934.8" y="5.800" width="1.300" height="4" fill="#444"/><rect x="930.2" y="7" width="1.200" height="1.400" fill="#666"/><rect x="939.4" y="7" width="1.200" height="1.400" fill="#666"/><text x="948.6" y="12">6</text><rect x="961.2" y="5.800" width="1.300" height="4" fill="#444"/><rect x="956.6" y="7" width="1.200" height="1.400" fill="#666"/><rect x="965.8" y="7" width="1.200" height="1.400" fill="#666"/><text x="975.0" y="12">7</text><rect x="987.5" y="5.800" width="1.300" height="4" fill="#444"/><rect x="983.0" y="7" width="1.200" height="1.400" fill="#666"/><rect x="992.1" y="7" width="1.200" height="1.400" fill="#666"/><text x="1001.3" y="12">8</text><rect x="1013.9" y="5.800" width="1.300" height="4" fill="#444"/><rect x="1009.3" y="7" width="1.200" height="1.400" fill="#666"/><rect x="1018.5" y="7" width="1.200" height="1.400" fill="#666"/><text x="1027.7" y="12">9</text><rect x="1040.3" y="5.800" width="1.300" height="4" fill="#444"/><rect x="1035.7" y="7" width="1.200" height="1.400" fill="#666"/><rect x="1043.4" y="7" width="1.200" height="1.400" fill="#666"/><text x="1054.1" y="12">10</text><rect x="1066.7" y="5.800" width="1.300" height="4" fill="#444"/><rect x="1063.6" y="7" width="1.200" height="1.400" fill="#666"/><rect x="1069.8" y="7" width="1.200" height="1.400" fill="#666"/><text x="1080.5" y="12">11</text><rect x="1093.1" y="5.800" width="1.300" height="4" fill="#444"/><rect x="1090.0" y="7" width="1.200" height="1.400" fill="#666"/><rect x="1096.2" y="7" width="1.200" height="1.400" fill="#666"/><text x="1106.9" y="12">12</text><rect x="1119.5" y="5.800" width="1.300" height="4" fill="#444"/><rect x="1116.4" y="7" width="1.200" height="1.400" fill="#666"/><rect x="1122.5" y="7" width="1.200" height="1.400" fill="#666"/><text x="1133.2" y="12">13</text><rect x="1145.8" y="5.800" width="1.300" height="4" fill="#444"/><rect x="1142.7" y="7" width="1.200" height="1.400" fill="#666"/><rect x="1148.9" y="7" width="1.200" height="1.400" fill="#666"/><text x="1159.6" y="12">14</text><rect x="1172.2" y="5.800" width="1.300" height="4" fill="#444"/><rect x="1169.1" y="7" width="1.200" height="1.400" fill="#666"/><rect x="1175.3" y="7" width="1.200" height="1.400" fill="#666"/><text x="1186.0" y="12">15</text><rect x="1198.6" y="5.800" width="1.300" height="4" fill="#444"/><rect x="1195.5" y="7" width="1.200" height="1.400" fill="#666"/><rect x="1201.7" y="7" width="1.200" height="1.400" fill="#666"/><text x="1212.4" y="12">16</text><rect x="354.4" y="5.800" width="1.300" height="4" fill="#444"/><rect x="358.6" y="7" width="1.200" height="1.400" fill="#666"/></svg>
<div class="abs" style="left:208.500px;top:207px;width:13.500px;height:502px;background:#fdfdfd"></div>
<svg class="abs" style="left:208.500px;top:207px" width="13.500" height="502" viewBox="208.500 207 13.500 502" font-family="Liberation Sans" font-size="10.400" fill="#4a4a4a" text-anchor="middle"><text transform="translate(219.300 220.6) rotate(-90)" x="0" y="0">9</text><rect x="213.500" y="233.2" width="3.800" height="1.300" fill="#444"/><rect x="215" y="228.6" width="1.400" height="1.200" fill="#666"/><rect x="215" y="237.8" width="1.400" height="1.200" fill="#666"/><text transform="translate(219.300 247.0) rotate(-90)" x="0" y="0">8</text><rect x="213.500" y="259.6" width="3.800" height="1.300" fill="#444"/><rect x="215" y="255.0" width="1.400" height="1.200" fill="#666"/><rect x="215" y="264.1" width="1.400" height="1.200" fill="#666"/><text transform="translate(219.300 273.3) rotate(-90)" x="0" y="0">7</text><rect x="213.500" y="285.9" width="3.800" height="1.300" fill="#444"/><rect x="215" y="281.3" width="1.400" height="1.200" fill="#666"/><rect x="215" y="290.5" width="1.400" height="1.200" fill="#666"/><text transform="translate(219.300 299.7) rotate(-90)" x="0" y="0">6</text><rect x="213.500" y="312.3" width="3.800" height="1.300" fill="#444"/><rect x="215" y="307.7" width="1.400" height="1.200" fill="#666"/><rect x="215" y="316.9" width="1.400" height="1.200" fill="#666"/><text transform="translate(219.300 326.1) rotate(-90)" x="0" y="0">5</text><rect x="213.500" y="338.7" width="3.800" height="1.300" fill="#444"/><rect x="215" y="334.1" width="1.400" height="1.200" fill="#666"/><rect x="215" y="343.3" width="1.400" height="1.200" fill="#666"/><text transform="translate(219.300 352.5) rotate(-90)" x="0" y="0">4</text><rect x="213.500" y="365.1" width="3.800" height="1.300" fill="#444"/><rect x="215" y="360.5" width="1.400" height="1.200" fill="#666"/><rect x="215" y="369.7" width="1.400" height="1.200" fill="#666"/><text transform="translate(219.300 378.9) rotate(-90)" x="0" y="0">3</text><rect x="213.500" y="391.4" width="3.800" height="1.300" fill="#444"/><rect x="215" y="386.9" width="1.400" height="1.200" fill="#666"/><rect x="215" y="396.0" width="1.400" height="1.200" fill="#666"/><text transform="translate(219.300 405.2) rotate(-90)" x="0" y="0">2</text><rect x="213.500" y="417.8" width="3.800" height="1.300" fill="#444"/><rect x="215" y="413.2" width="1.400" height="1.200" fill="#666"/><rect x="215" y="422.4" width="1.400" height="1.200" fill="#666"/><text transform="translate(219.300 431.6) rotate(-90)" x="0" y="0">1</text><rect x="213.500" y="444.2" width="3.800" height="1.300" fill="#444"/><rect x="215" y="439.6" width="1.400" height="1.200" fill="#666"/><rect x="215" y="448.8" width="1.400" height="1.200" fill="#666"/><text transform="translate(219.300 458.0) rotate(-90)" x="0" y="0">0</text><rect x="213.500" y="470.6" width="3.800" height="1.300" fill="#444"/><rect x="215" y="466.0" width="1.400" height="1.200" fill="#666"/><rect x="215" y="475.2" width="1.400" height="1.200" fill="#666"/><text transform="translate(219.300 484.4) rotate(-90)" x="0" y="0">1</text><rect x="213.500" y="497.0" width="3.800" height="1.300" fill="#444"/><rect x="215" y="492.4" width="1.400" height="1.200" fill="#666"/><rect x="215" y="501.6" width="1.400" height="1.200" fill="#666"/><text transform="translate(219.300 510.8) rotate(-90)" x="0" y="0">2</text><rect x="213.500" y="523.4" width="3.800" height="1.300" fill="#444"/><rect x="215" y="518.8" width="1.400" height="1.200" fill="#666"/><rect x="215" y="527.9" width="1.400" height="1.200" fill="#666"/><text transform="translate(219.300 537.1) rotate(-90)" x="0" y="0">3</text><rect x="213.500" y="549.7" width="3.800" height="1.300" fill="#444"/><rect x="215" y="545.1" width="1.400" height="1.200" fill="#666"/><rect x="215" y="554.3" width="1.400" height="1.200" fill="#666"/><text transform="translate(219.300 563.5) rotate(-90)" x="0" y="0">4</text><rect x="213.500" y="576.1" width="3.800" height="1.300" fill="#444"/><rect x="215" y="571.5" width="1.400" height="1.200" fill="#666"/><rect x="215" y="580.7" width="1.400" height="1.200" fill="#666"/><text transform="translate(219.300 589.9) rotate(-90)" x="0" y="0">5</text><rect x="213.500" y="602.5" width="3.800" height="1.300" fill="#444"/><rect x="215" y="597.9" width="1.400" height="1.200" fill="#666"/><rect x="215" y="607.1" width="1.400" height="1.200" fill="#666"/><text transform="translate(219.300 616.3) rotate(-90)" x="0" y="0">6</text><rect x="213.500" y="628.9" width="3.800" height="1.300" fill="#444"/><rect x="215" y="624.3" width="1.400" height="1.200" fill="#666"/><rect x="215" y="633.5" width="1.400" height="1.200" fill="#666"/><text transform="translate(219.300 642.7) rotate(-90)" x="0" y="0">7</text><rect x="213.500" y="655.2" width="3.800" height="1.300" fill="#444"/><rect x="215" y="650.7" width="1.400" height="1.200" fill="#666"/><rect x="215" y="659.8" width="1.400" height="1.200" fill="#666"/><text transform="translate(219.300 669.0) rotate(-90)" x="0" y="0">8</text><rect x="213.500" y="681.6" width="3.800" height="1.300" fill="#444"/><rect x="215" y="677.0" width="1.400" height="1.200" fill="#666"/><rect x="215" y="686.2" width="1.400" height="1.200" fill="#666"/><text transform="translate(219.300 695.4) rotate(-90)" x="0" y="0">9</text><rect x="215" y="212.0" width="1.400" height="1.200" fill="#666"/><rect x="213.500" y="708.0" width="3.800" height="1.300" fill="#444"/><rect x="215" y="703.0" width="1.400" height="1.200" fill="#666"/></svg>
</div>
<!--SLIDE-->
<div class="abs" id="slide"></div>
<div class="abs" style="left:355.500px;top:207.500px;width:140.500px;height:139px;background:#fdfdfd"></div>
<svg class="abs" style="left:355px;top:207px;filter:blur(.5px)" width="141" height="140" viewBox="355 207 141 140">
<g fill="none" stroke="#1d5f9c">
<circle cx="425" cy="257" r="22.500" stroke-width="2.600" stroke="#1a4f8e"/>
<ellipse cx="425" cy="257" rx="10.500" ry="22.500" stroke-width="1.500" stroke="#3f86a8"/>
<path d="M425 234.500v45M403 257h44" stroke-width="1.500" stroke="#3f86a8"/>
<path d="M406.500 245q18.500-7 37 0M406.500 269.500q18.500 6.500 37 0" stroke-width="1.400" stroke="#3f86a8"/>
<path d="M426 257h20" stroke-width="2.400" stroke="#15406f"/>
</g>
<path d="M369.500 289.500c5-7 11-16 18-15.500 9 .7 16 8 26 11.500 12 4 28 1 37-8.500l1.300 2.200c-9 10-27 13.500-40 10-11-3-18-7-26-6.500-6 .4-11 3.300-16.300 6.800z" fill="#1c5fae"/>
<path d="M451.500 274v14" stroke="#2b62a0" stroke-width="1.600"/><circle cx="451.500" cy="272" r="1" fill="#2b62a0"/>
<g font-family="Liberation Serif" font-weight="bold" font-size="9.800" fill="#3a3a3a" text-anchor="middle"><text x="424.500" y="318.500" textLength="129" lengthAdjust="spacingAndGlyphs">Институт экономики Комитета</text><text x="424.500" y="329" textLength="63" lengthAdjust="spacingAndGlyphs">науки МОН РК</text></g>
</svg>
<div id="stx" style="filter:blur(.5px)">
<div class="t st1" id="s1" style="left:637.500px;top:225px;transform:scaleX(1.0763)">Министерство образования и науки РК</div>
<div class="t st1" id="s2" style="left:764px;top:252px;transform:scaleX(1.0827)">Комитет науки</div>
<div class="t st1" id="s3" style="left:734px;top:306.400px;transform:scaleX(1.0789)">Институт экономики</div>
<div class="t st2" id="s4" style="left:425px;top:439.600px;transform:scaleX(1.0290)">РАЗВИТИЕ ТУРИЗМА КАК ФАКТОР ПОВЫШЕНИЯ УРОВНЯ ЖИЗНИ</div>
<div class="t st2" id="s5" style="left:601px;top:471.600px;transform:scaleX(1.0021)">НАСЕЛЕНИЯ СЕЛЬСКИХ РАЙОНОВ</div>
<div class="t st3" id="s6" style="left:1014px;top:587px;transform:scaleX(1.1153)">Тлеубердинова А.Т.</div>
<div class="t st3" id="s7" style="left:1106px;top:616.300px;transform:scaleX(1.0949)">д.э.н., ГНС</div>
<div class="t st3" id="s8" style="left:869px;top:645.400px;transform:scaleX(1.1385)">Института экономики КН МОН РК</div>
<svg class="abs" style="left:1013px;top:607px" width="160" height="4" viewBox="0 0 160 4"><path d="M0 2.500 l1.500-1.500 1.500 1.500 1.500-1.500 1.500 1.500 1.500-1.500 1.500 1.500 1.500-1.500 1.500 1.500 1.500-1.500 1.500 1.500 1.500-1.500 1.500 1.500 1.500-1.500 1.500 1.500 1.500-1.500 1.500 1.500 1.500-1.500 1.500 1.500 1.500-1.500 1.500 1.500 1.500-1.500 1.500 1.500 1.500-1.500 1.500 1.500 1.500-1.500 1.500 1.500 1.500-1.500 1.500 1.500 1.500-1.500 1.500 1.500 1.500-1.500 1.500 1.500 1.500-1.500 1.500 1.500 1.500-1.500 1.500 1.500 1.500-1.500 1.500 1.500 1.500-1.500 1.500 1.500 1.500-1.500 1.500 1.500 1.500-1.500 1.500 1.500 1.500-1.500 1.500 1.500 1.500-1.500 1.500 1.500 1.500-1.500 1.500 1.500 1.500-1.500 1.500 1.500 1.500-1.500 1.500 1.500 1.500-1.500 1.500 1.500 1.500-1.500 1.500 1.500 1.500-1.500 1.500 1.500 1.500-1.500 1.500 1.500 1.500-1.500 1.500 1.500 1.500-1.500 1.500 1.500 1.500-1.500 1.500 1.500 1.500-1.500 1.500 1.500 1.500-1.500 1.500 1.500 1.500-1.500 1.500 1.500 1.500-1.500 1.500 1.500 1.500-1.500 1.500 1.500 1.500-1.500 1.500 1.500 1.500-1.500 1.500 1.500 1.500-1.500 1.500 1.500 1.500-1.500 1.500 1.500 1.500-1.500 1.500 1.500 1.500-1.500 1.500 1.500 1.500-1.500 1.500 1.500 1.500-1.500 1.500 1.500 1.500-1.500 1.500 1.500 1.500-1.500 1.500 1.500 1.500-1.500 1.500 1.500 1.500-1.500 1.500 1.500 1.500-1.500 1.500 1.500 1.500-1.500 1.500 1.500 1.500-1.500 1.500 1.500 1.500-1.500 1.500 1.500" fill="none" stroke="#e2463e" stroke-width="1.100"/></svg>
</div>
<!--STATUS-->
<div class="abs" style="left:202px;top:721.500px;width:1164px;height:4px;background:linear-gradient(180deg,#e0e0e0,#d8d8d8 60%,#e8e8e8)"></div>
<div class="abs" style="left:0;top:747px;width:1366px;height:21px;background:#000"></div>
<div class="abs" style="left:1017px;top:727px;width:37px;height:20px;background:#c9c9c9"></div>
<div class="blur">
<div class="t sb" style="left:7px;top:731px">Слайд 1 из 15</div>
<svg class="abs" style="left:97px;top:729px" width="17" height="15" viewBox="0 0 17 15"><path d="M1 2.500c2.500-1.300 4.500-1.300 6.500 0v10c-2-1.300-4-1.300-6.500 0zM7.500 2.500c1.500-1 2.500-1.200 4-1M7.500 12.500c1.200-.8 2.200-1 3.200-1" fill="none" stroke="#555" stroke-width="1.100"/><path d="M12 4c0-3 4-3 4-.5 0 2-2 2-2 4.500M14 10.500v1.500" fill="none" stroke="#555" stroke-width="1.200"/></svg>
<div class="t sb" style="left:129px;top:731px">русский</div>
<svg class="abs" style="left:831px;top:729px" width="12" height="15" viewBox="0 0 12 15"><path d="M6 .5l2.500 3h-5z" fill="#666"/><path d="M1 6.500h10M1 9h10M1 11.500h10M1 14h10" stroke="#9a9a9a" stroke-width="1.200"/></svg>
<div class="t sb" style="left:847.500px;top:731px">Заметки</div>
<svg class="abs" style="left:912px;top:730px" width="14" height="13" viewBox="0 0 14 13"><path d="M.5 .5h13v8.500H8l-2.500 3.500V9H.5z" fill="#666"/></svg>
<div class="t sb" style="left:928.500px;top:731px">Примечания</div>
<svg class="abs" style="left:1028px;top:729px" width="16" height="15" viewBox="0 0 16 15"><rect x=".7" y=".7" width="14.600" height="13.600" fill="#d9d9d9" stroke="#555" stroke-width="1.200"/><path d="M4.500 1v13M4.500 9.500h11" stroke="#555" stroke-width="1.100"/><rect x="7.500" y="3.500" width="5" height="2.500" fill="none" stroke="#666" stroke-width=".8"/></svg>
<svg class="abs" style="left:1066px;top:729px" width="16" height="15" viewBox="0 0 16 15"><g fill="none" stroke="#666" stroke-width="1.200"><rect x="1" y="1" width="5" height="4.500"/><rect x="10" y="1" width="5" height="4.500"/><rect x="1" y="9" width="5" height="4.500"/><rect x="10" y="9" width="5" height="4.500"/></g></svg>
<svg class="abs" style="left:1103px;top:729px" width="16" height="15" viewBox="0 0 16 15"><path d="M1 2c2.500-1.300 5-1.300 7 0 2-1.300 4.500-1.300 7 0v10c-2.500-1.300-5-1.300-7 0-2-1.300-4.500-1.300-7 0z" fill="#e4e4e4" stroke="#666" stroke-width="1.100"/><path d="M8 2v10" stroke="#666"/><path d="M10 4.500h3.500M10 7h3.500" stroke="#888" stroke-width=".9"/></svg>
<svg class="abs" style="left:1141px;top:729px" width="16" height="15" viewBox="0 0 16 15"><path d="M1 1.500h14M2.500 1.500v7.500h11V1.500M8 9v3M5 14l3-2.500 3 2.500" fill="none" stroke="#666" stroke-width="1.200"/></svg>
<div class="abs" style="left:1173px;top:736px;width:7px;height:1.600px;background:#555"></div>
<div class="abs" style="left:1184px;top:736.300px;width:99px;height:1px;background:#8a8a8a"></div>
<div class="abs" style="left:1233.500px;top:733px;width:1px;height:8px;background:#9a9a9a"></div>
<div class="abs" style="left:1217px;top:730.500px;width:3.500px;height:12.500px;background:#444"></div>
<div class="abs" style="left:1287px;top:736px;width:8.500px;height:1.600px;background:#555"></div><div class="abs" style="left:1290.500px;top:732.500px;width:1.600px;height:8.500px;background:#555"></div>
<div class="t sb" style="left:1310px;top:731.500px;font-size:11.500px">70%</div>
<svg class="abs" style="left:1345px;top:729px" width="15" height="15" viewBox="0 0 15 15"><rect x=".7" y=".7" width="13.600" height="13.600" fill="none" stroke="#666" stroke-width="1.200"/><path d="M3 6V3h3M9 3h3v3M12 9v3H9M6 12H3V9" fill="none" stroke="#555" stroke-width="1.300"/><path d="M3.500 3.500l2.500 2.500M11.500 3.500L9 6M11.500 11.500L9 9M3.500 11.500L6 9" stroke="#555"/></svg>
</div>
<!-- right scrollbar -->
<div class="abs" style="left:1350px;top:538px;width:16px;height:113px;background:#d2d2d2"></div>
<div class="abs" style="left:1350.500px;top:651px;width:14.500px;height:15px;background:#fdfdfd;border:1px solid #c8c8c8"></div>
<svg class="abs" style="left:1354px;top:657px" width="7" height="5"><path d="M0 .5h7L3.500 4.500z" fill="#444"/></svg>
<svg class="abs" style="left:1353px;top:672px" width="9" height="9" viewBox="0 0 9 9"><path d="M4.500 0L8 3.500H1zM4.500 4L8 7.500H1z" fill="#555"/><path d="M1 8.500h7" stroke="#555"/></svg>
<svg class="abs" style="left:1353px;top:689px" width="9" height="9" viewBox="0 0 9 9"><path d="M4.500 9L8 5.500H1zM4.500 5L8 1.500H1z" fill="#555"/><path d="M1 .5h7" stroke="#555"/></svg>
<!--VIDEO-->
<div class="abs" id="video">
<svg class="abs" style="left:0;top:0" width="159" height="538" viewBox="1207 0 159 538">
<defs>
<filter id="vb" x="-10%" y="-10%" width="120%" height="120%"><feGaussianBlur stdDeviation="1.300"/></filter>
<filter id="vb2" x="-10%" y="-10%" width="120%" height="120%"><feGaussianBlur stdDeviation=".7"/></filter>
<linearGradient id="w1" x1="0" y1="0" x2="1" y2="0"><stop offset="0" stop-color="#f1f5f1"/><stop offset=".35" stop-color="#dfe8e1"/><stop offset="1" stop-color="#cfdbd0"/></linearGradient>
<filter id="vb3" x="-10%" y="-10%" width="120%" height="120%"><feGaussianBlur stdDeviation="1.900"/></filter><radialGradient id="fg3" cx=".55" cy=".4" r=".7"><stop offset="0" stop-color="#a98074"/><stop offset=".6" stop-color="#9a7166"/><stop offset="1" stop-color="#7a5850"/></radialGradient>
<clipPath id="c1"><rect x="1207" y="0" width="159" height="88"/></clipPath>
<clipPath id="c2"><rect x="1207" y="88" width="159" height="90"/></clipPath>
<clipPath id="c3"><rect x="1207" y="178" width="159" height="90"/></clipPath>
</defs>
<rect x="1207" y="0" width="159" height="538" fill="#1b1b1b"/>
<!-- tile 1 -->
<g clip-path="url(#c1)"><g filter="url(#vb)">
<rect x="1200" y="-5" width="175" height="98" fill="url(#w1)"/>
<rect x="1200" y="-5" width="55" height="60" fill="#f3f7f4" opacity=".8"/>
<path d="M1207 72l50-14v8l-50 14z" fill="#eef0ee"/>
<rect x="1330" y="-5" width="5" height="50" fill="#e4ebe6"/>
<rect x="1340" y="-5" width="30" height="75" fill="#c6d3c8"/>
<!-- logo disc -->
<circle cx="1340" cy="48" r="20.500" fill="#cfc8d8"/><circle cx="1340" cy="48" r="17" fill="#eceaf0"/><circle cx="1340" cy="48" r="20" fill="none" stroke="#a89ab5" stroke-width="2.500"/>
<path d="M1329 42q5-6 10 0 5-6 11 0v7q-5 6-10 3-6 3-11-3z" fill="#3a4fb0"/><path d="M1333 51h14v4h-14z" fill="#c23a55"/><circle cx="1340" cy="44" r="3" fill="#e9eef8"/>
<rect x="1338" y="68" width="4" height="8" fill="#555"/>
<!-- person -->
<path d="M1252 80c0-22 8-30 26-33h22c16 3 22 12 22 33z" fill="#4a4448"/>
<path d="M1289 5c-15 0-21 10-21 24 0 10-1 16-3 22 5 4 12 4 16 2l8-4 9 4c5 2 10 1 14-2-3-7-3-13-3-22 0-14-6-24-20-24z" fill="#34272a"/>
<ellipse cx="1288" cy="35.500" rx="12.300" ry="16.500" fill="#c9a393"/>
<path d="M1276 27c2-8 8-11 13-11s10 3 12 11c-7-4-18-4-25 0z" fill="#3a2b2d"/>
<path d="M1276 32.500h10.500M1290.500 32.500h10.500" stroke="#3f3030" stroke-width="3"/><path d="M1286 32h5" stroke="#4a3a3a"/>
<path d="M1283 50h10l-1 8h-8z" fill="#c7a89a"/>
<path d="M1284 57l-6 5 9 16 9-16-6-5z" fill="#373044"/>
<path d="M1279 56l8 21 8-21" fill="none" stroke="#b9b3bd" stroke-width="1.400"/>
</g></g>
<rect x="1207" y="73.500" width="156" height="14.500" fill="#262626" opacity=".93"/>
<rect x="1207" y="88" width="159" height="1.500" fill="#e9ecec"/>
<!-- tile 2 -->
<g clip-path="url(#c2)"><g filter="url(#vb)">
<rect x="1200" y="86" width="175" height="96" fill="#e3e8e6"/>
<rect x="1207" y="125" width="165" height="45" fill="#d3d7d3"/>
<rect x="1275" y="90" width="28" height="20" fill="#fbfcfb"/><rect x="1332" y="90" width="40" height="26" fill="#fcfdfd"/>
<rect x="1304" y="88" width="8" height="7" fill="#9a8f6e"/>
<rect x="1200" y="86" width="40" height="38" fill="#167a6a"/>
<rect x="1212" y="105" width="30" height="18" fill="#e8eceb"/>
<rect x="1217" y="108" width="24" height="13" fill="#1e2226"/>
<path d="M1200 128l50-4v10l-50 6z" fill="#d9c3ab"/><rect x="1200" y="134" width="48" height="30" fill="#cdb399"/>
<rect x="1217" y="126" width="20" height="2.500" fill="#2a2a2a"/>
<path d="M1242 127h20v15h-22z" fill="#23272b"/><path d="M1234 141h28v4h-28z" fill="#3a3a3a"/><path d="M1237 145l1 17M1259 145l1 15M1247 145v12" stroke="#b9b1a5" stroke-width="1.500"/>
<rect x="1322" y="112" width="40" height="24" fill="#eef0f0"/><path d="M1322 124h38v3h-38z" fill="#c9cccc"/>
<ellipse cx="1345" cy="112" rx="4" ry="6" fill="#2a2a30"/><rect x="1337" y="112" width="8" height="10" fill="#2b2b33"/>
<rect x="1335" y="116" width="12" height="10" fill="#8a8d92" opacity=".7"/><rect x="1342" y="125" width="16" height="10" fill="#a8abae" opacity=".6"/>
<ellipse cx="1330" cy="148" rx="6" ry="8" fill="#f3f5f3" opacity=".8"/>
<path d="M1273 7l4 0" stroke="none"/>
<path d="M1278 108l2 8" stroke="#333" stroke-width="2"/>
<!-- person -->
<path d="M1267 168c0-20 6-30 22-33l14 4 14 2c5 6 5 16 5 27z" fill="#15161a"/>
<path d="M1299 140l8 4-1 18-7 3z" fill="#e9ecee"/>
<path d="M1293 128c6 6 20 8 24 2l-3 14c-8 3-14 2-19-4z" fill="#c9a898"/>
<ellipse cx="1304.500" cy="119" rx="17" ry="13.500" fill="#15151a"/>
</g></g>
<rect x="1207" y="163.500" width="157" height="13.500" fill="#2a2a2a" opacity=".93"/>
<!-- tile 3 -->
<g clip-path="url(#c3)"><g filter="url(#vb3)">
<rect x="1200" y="176" width="175" height="96" fill="#a4a6b2"/>
<rect x="1200" y="178" width="62" height="94" fill="#abadb9"/>
<rect x="1296" y="174" width="50" height="92" fill="#434a49"/><path d="M1310 178v80M1324 178v80M1337 178v80" stroke="#566260" stroke-width="3.500"/>
<rect x="1345" y="172" width="30" height="100" fill="#f8f9fa"/>
<path d="M1308 272c0-12 10-19 32-17 9 5 12 10 14 17z" fill="#a6a8aa"/>
<path d="M1262 248l22 8 22-4 8 18h-52z" fill="#7d584f"/>
<ellipse cx="1286" cy="226" rx="28" ry="33" fill="url(#fg3)"/>
<path d="M1256 230c-9-32 6-50 29-50s37 18 29 46c-5-15-13-24-28-24s-25 10-30 28z" fill="#7f6a52"/>
<ellipse cx="1285" cy="197" rx="25" ry="15" fill="#8a7358"/>
<path d="M1262 221c8-12 36-16 50-6l-2 8c-14-6-32-4-46 4z" fill="#8e6a5c" opacity=".7"/>
<path d="M1256 231l58-7" stroke="#241d20" stroke-width="3.200"/>
<rect x="1261" y="228" width="23" height="12" rx="4" fill="#3e3032" opacity=".8"/><rect x="1289" y="222" width="22" height="12" rx="4" fill="#3e3032" opacity=".8"/>
<rect x="1265" y="231" width="15" height="6" rx="2.500" fill="#8d6e68" opacity=".8"/><rect x="1293" y="225" width="14" height="6" rx="2.500" fill="#8d6e68" opacity=".8"/>
<path d="M1308 220l7-2" stroke="#dedede" stroke-width="2.200"/>
<path d="M1276 249c6 3 16 3 22-1" stroke="#6d443e" stroke-width="3.500" fill="none" opacity=".8"/>
<ellipse cx="1275" cy="246" rx="14" ry="10" fill="#6d4a44" opacity=".35"/>
</g></g>
<rect x="1207" y="253.500" width="104" height="14.500" fill="#262626" opacity=".9"/>
<!-- avatar tile -->
<rect x="1240" y="268" width="91" height="90" fill="#f1f0ed"/>
<g filter="url(#vb2)"><circle cx="1285.500" cy="309" r="19" fill="#c9c7c1"/><path d="M1247 358c0-18 14-29 38.500-29s38.500 11 38.500 29z" fill="#c9c7c1"/></g>
<rect x="1239" y="343.500" width="29" height="12" fill="#5a5a58" opacity=".85"/>
</svg>
<div style="filter:blur(.4px)">
<div class="vn" id="v0" style="left:2.500px;top:76px;font-size:9.300px;letter-spacing:.05px;transform:scaleX(0.9703)">Куттубаева Тосканай Айтмукановна</div>
<div class="vn" id="v1" style="left:2.500px;top:166px;font-size:9.300px;letter-spacing:.05px;transform:scaleX(0.9873)">Сарсенбекова Гульнар Алибековна</div>
<div class="vn" id="v2" style="left:2.500px;top:256px;font-size:9.300px;letter-spacing:.05px;transform:scaleX(0.9732)">Тлеубердинова Айжан</div>
<div class="vn" id="v3" style="left:2.500px;top:345.500px;font-size:8.600px;transform:scaleX(1.0884)">Акимов Олег</div>
<div class="vn" id="v4" style="left:2.500px;top:435px;font-size:8.600px;transform:scaleX(1.0580)">Сергей Зяблицкий</div>
<div class="vn" id="v5" style="left:2.500px;top:525px;font-size:8.600px;transform:scaleX(1.0917)">Ябачева Елена Валерьевна</div>
</div>
</div>
</body>
</html>
